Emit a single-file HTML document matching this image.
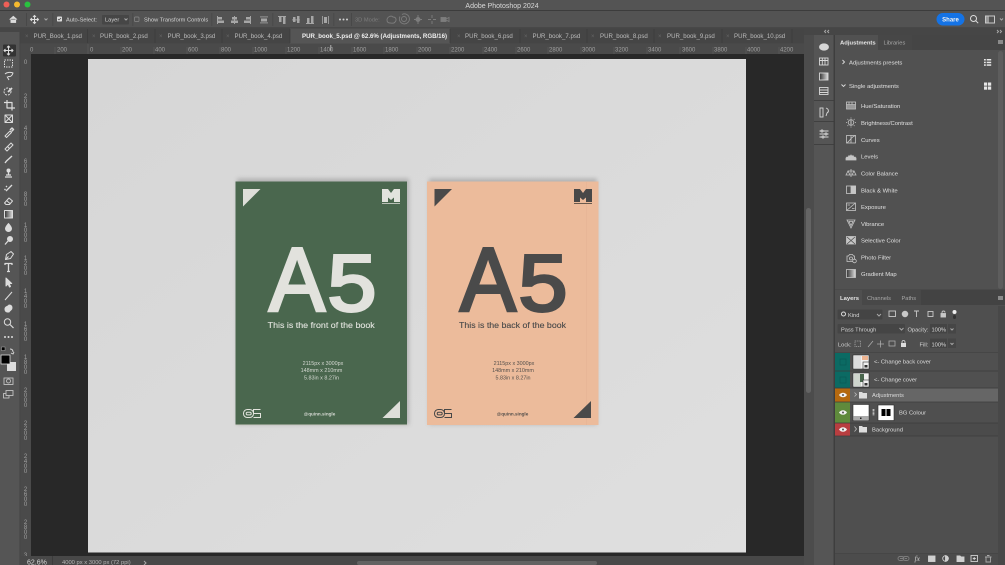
<!DOCTYPE html>
<html><head><meta charset="utf-8"><style>
html,body{margin:0;padding:0;background:#535353;overflow:hidden}
svg{display:block;filter:blur(.3px)}
text{font-family:"Liberation Sans",sans-serif;white-space:pre}
.tb{font-size:5.7px;fill:#d4d4d4}
.tab{font-size:6.1px;fill:#bcbcbc}
.r{font-size:6px;fill:#a0a0a0}
.a{font-size:5.9px;fill:#e0e0e0}
.l{font-size:5.8px;fill:#dcdcdc}
.ic{fill:none;stroke:#dcdcdc;stroke-width:1}
.f{fill:#dcdcdc}
.d{fill:none;stroke:#a8a8a8;stroke-width:1}
</style></head><body>
<svg width="1005" height="565" viewBox="0 0 1005 565" xmlns="http://www.w3.org/2000/svg">
<defs>
<filter id="sh" x="-10%" y="-10%" width="120%" height="120%"><feGaussianBlur stdDeviation="2"/></filter>
<linearGradient id="g1" x1="0" x2="1"><stop offset="0" stop-color="#333"/><stop offset="1" stop-color="#ddd"/></linearGradient>
<linearGradient id="doc" x1="0" y1="0" x2="1" y2="1"><stop offset="0" stop-color="#d6d6d6"/><stop offset="1" stop-color="#dfdfdf"/></linearGradient>
</defs>
<rect width="1005" height="565" fill="#535353"/>
<!-- title bar -->
<rect width="1005" height="10" fill="#545454"/>
<rect y="10" width="1005" height="1" fill="#3c3c3c"/>
<circle cx="6.5" cy="4.5" r="3" fill="#ee5f57"/><circle cx="17" cy="4.5" r="3" fill="#f5b92e"/><circle cx="27.5" cy="4.5" r="3" fill="#29c13f"/>
<text x="502" y="8" font-size="7" fill="#d8d8d8" text-anchor="middle">Adobe Photoshop 2024</text>
<!-- options bar -->
<rect y="11" width="1005" height="17" fill="#535353"/>
<rect y="27.5" width="1005" height=".8" fill="#3e3e3e"/>
<path d="M9.5 19.5l3.8-3.4 3.8 3.4M10.8 18.6v4h5v-4z" class="f" stroke="#ddd" stroke-width=".6"/>
<rect x="26" y="13" width=".7" height="13" fill="#444"/>
<path class="ic" d="M34.5 15.5v8M30.5 19.5h8M33 17l1.5-1.5L36 17M33 22l1.5 1.5L36 22M32 18l-1.5 1.5L32 21M37 18l1.5 1.5L37 21"/>
<path class="d" d="M44.5 18.5l1.5 1.5 1.500-1.500"/>
<rect x="52.500" y="13" width=".7" height="13" fill="#444"/>
<rect x="57" y="16.500" width="5" height="5" rx=".8" fill="#ddd"/><path d="M58 19l1 1 2-2" stroke="#444" fill="none" stroke-width=".7"/>
<text x="66" y="21.500" class="tb">Auto-Select:</text>
<rect x="102" y="15" width="27" height="9.500" rx="1" fill="#464646"/><text x="105" y="21.500" class="tb">Layer</text><path class="d" d="M124.500 18.500l1.500 1.500 1.500-1.500"/>
<rect x="132.500" y="13" width=".7" height="13" fill="#444"/>
<rect x="134.500" y="17" width="4.500" height="4.500" rx=".8" fill="none" stroke="#8a8a8a" stroke-width=".7"/>
<text x="144" y="21.500" class="tb">Show Transform Controls</text>
<rect x="211.500" y="13" width=".7" height="13" fill="#444"/>
<g fill="#a6a6a6"><rect x="217" y="16" width="1" height="8"/><rect x="218" y="17" width="4" height="2.500"/><rect x="218" y="20.500" width="6" height="2.500"/><rect x="234" y="16" width="1" height="8"/><rect x="232" y="17" width="5" height="2.500"/><rect x="231" y="20.500" width="7" height="2.500"/><rect x="250" y="16" width="1" height="8"/><rect x="246" y="17" width="4" height="2.500"/><rect x="244" y="20.500" width="6" height="2.500"/><rect x="260" y="16.500" width="8" height=".8"/><rect x="260" y="22.500" width="8" height=".8"/><rect x="261" y="18.500" width="6" height="3"/></g>
<rect x="272.500" y="13" width=".7" height="13" fill="#444"/>
<g fill="#a6a6a6"><rect x="278" y="16" width="8" height="1"/><rect x="279" y="17" width="2.500" height="5"/><rect x="283" y="17" width="2.500" height="7"/><rect x="292" y="19.500" width="8" height=".8"/><rect x="293" y="17" width="2.500" height="5"/><rect x="297" y="16" width="2.500" height="7"/><rect x="306" y="23" width="8" height="1"/><rect x="307" y="18" width="2.500" height="5"/><rect x="311" y="16" width="2.500" height="7"/><rect x="322" y="16" width=".8" height="8"/><rect x="328" y="16" width=".8" height="8"/><rect x="324" y="17" width="3" height="6"/></g>
<rect x="333.500" y="13" width=".7" height="13" fill="#444"/>
<g fill="#cfcfcf"><circle cx="340" cy="19.500" r="1"/><circle cx="343.500" cy="19.500" r="1"/><circle cx="347" cy="19.500" r="1"/></g>
<rect x="351" y="13" width=".7" height="13" fill="#444"/>
<text x="355" y="21.500" class="tb" style="fill:#7d7d7d">3D Mode:</text>
<g fill="none" stroke="#7d7d7d" stroke-width=".9"><path d="M387 20c0-3 4-5 6-3 3 0 4 3 2 5-1 2-4 1-5 1-2 0-3-1-3-3z"/><circle cx="404" cy="19" r="2.500"/><path d="M402 14.500a5 5 0 1 1-2 2"/><path d="M418 15v9M414 19.500h8"/><circle cx="418" cy="19.500" r="2" fill="#7d7d7d"/><path d="M432 15v3M432 21v3M428 19.500h3M433 19.500h3"/><rect x="441" y="17.500" width="5" height="4" fill="#7d7d7d"/><path d="M446 19l3-1.500v4L446 20"/></g>
<rect x="936.500" y="13" width="28" height="12.500" rx="6.200" fill="#1473e6"/>
<text x="950.500" y="21.500" font-size="6" font-weight="bold" fill="#f2f2f2" text-anchor="middle">Share</text>
<circle cx="973.500" cy="18.500" r="3" class="ic"/><path class="ic" d="M975.700 20.700l2.500 2.500"/>
<rect x="985.500" y="16" width="9" height="7" fill="none" stroke="#c8c8c8"/><rect x="986" y="16.500" width="3" height="6" fill="#999"/>
<path class="d" d="M1000 18.500l1.500 1.500 1.500-1.500"/>
<!-- tabs -->
<rect y="28.500" width="804" height="15" fill="#454545"/>
<rect y="28.500" width="20" height="15" fill="#4a4a4a"/>
<rect x="290" y="28.500" width="160" height="15" fill="#555"/>
<g stroke="#3b3b3b" stroke-width=".7"><path d="M87.500 29v14M155 29v14M222 29v14M290 29v14M450 29v14M520 29v14M587 29v14M654 29v14M722 29v14M792 29v14"/></g>
<g class="tab">
<text x="33.500" y="38">PUR_Book_1.psd</text><text x="100" y="38">PUR_book_2.psd</text><text x="167.500" y="38">PUR_book_3.psd</text><text x="234.500" y="38">PUR_book_4.psd</text>
<text x="302" y="38" style="fill:#f0f0f0;font-weight:bold" textLength="145" lengthAdjust="spacingAndGlyphs">PUR_book_5.psd @ 62.6% (Adjustments, RGB/16)</text>
<text x="465" y="38">PUR_book_6.psd</text><text x="532.500" y="38">PUR_book_7.psd</text><text x="600" y="38">PUR_book_8.psd</text><text x="667" y="38">PUR_book_9.psd</text><text x="734" y="38">PUR_book_10.psd</text></g>
<path class="d" d="M805 33.500l2 2-2 2M808 33.500l2 2-2 2"/>
<g font-size="6"><text x="25" y="38" fill="#666">×</text><text x="92" y="38" fill="#666">×</text><text x="159" y="38" fill="#666">×</text><text x="226" y="38" fill="#666">×</text><text x="457" y="38" fill="#666">×</text><text x="524" y="38" fill="#666">×</text><text x="591" y="38" fill="#666">×</text><text x="658" y="38" fill="#666">×</text><text x="726" y="38" fill="#666">×</text></g>
<!-- rulers -->
<rect x="20" y="43.500" width="784" height="10.500" fill="#4a4a4a"/>
<rect x="20" y="44" width="11" height="512" fill="#4a4a4a"/>
<rect x="0" y="28.500" width="20" height="4" fill="#464646"/>
<rect x="0" y="32" width="20" height="533" fill="#555"/>
<rect x="19.500" y="32" width=".8" height="533" fill="#444"/>
<g class="r">
<text x="30" y="51.500">0</text><text x="57" y="51.500">200</text><text x="90" y="51.500">0</text><text x="122" y="51.500">200</text><text x="155" y="51.500">400</text><text x="188" y="51.500">600</text><text x="221" y="51.500">800</text><text x="254" y="51.500">1000</text><text x="287" y="51.500">1200</text><text x="320" y="51.500">1400</text><text x="353" y="51.500">1600</text><text x="385" y="51.500">1800</text><text x="418" y="51.500">2000</text><text x="451" y="51.500">2200</text><text x="484" y="51.500">2400</text><text x="517" y="51.500">2600</text><text x="549" y="51.500">2800</text><text x="582" y="51.500">3000</text><text x="615" y="51.500">3200</text><text x="648" y="51.500">3400</text><text x="682" y="51.500">3600</text><text x="714" y="51.500">3800</text><text x="747" y="51.500">4000</text><text x="780" y="51.500">4200</text>
</g>
<path stroke="#5e5e5e" stroke-width=".6" fill="none" d="M55 47v7M88 44v10M121 47v7M154 47v7M187 47v7M220 47v7M253 47v7M286 47v7M319 47v7M352 47v7M384 47v7M417 47v7M450 47v7M483 47v7M516 47v7M548 47v7M581 47v7M614 47v7M647 47v7M680 47v7M713 47v7M746 47v7M779 47v7"/>
<rect x="330.500" y="45" width=".7" height="6" fill="#ddd"/>
<g class="r" text-anchor="middle">
<text x="25.500" y="64">0</text>
<text x="25.500" y="98">2</text><text x="25.500" y="103">0</text><text x="25.500" y="108">0</text>
<text x="25.500" y="130">4</text><text x="25.500" y="135">0</text><text x="25.500" y="140">0</text>
<text x="25.500" y="163">6</text><text x="25.500" y="168">0</text><text x="25.500" y="173">0</text>
<text x="25.500" y="196">8</text><text x="25.500" y="201">0</text><text x="25.500" y="206">0</text>
<text x="25.500" y="227">1</text><text x="25.500" y="232">0</text><text x="25.500" y="237">0</text><text x="25.500" y="242">0</text>
<text x="25.500" y="260">1</text><text x="25.500" y="265">2</text><text x="25.500" y="270">0</text><text x="25.500" y="275">0</text>
<text x="25.500" y="293">1</text><text x="25.500" y="298">4</text><text x="25.500" y="303">0</text><text x="25.500" y="308">0</text>
<text x="25.500" y="326">1</text><text x="25.500" y="331">6</text><text x="25.500" y="336">0</text><text x="25.500" y="341">0</text>
<text x="25.500" y="359">1</text><text x="25.500" y="364">8</text><text x="25.500" y="369">0</text><text x="25.500" y="374">0</text>
<text x="25.500" y="392">2</text><text x="25.500" y="397">0</text><text x="25.500" y="402">0</text><text x="25.500" y="407">0</text>
<text x="25.500" y="425">2</text><text x="25.500" y="430">2</text><text x="25.500" y="435">0</text><text x="25.500" y="440">0</text>
<text x="25.500" y="458">2</text><text x="25.500" y="463">4</text><text x="25.500" y="468">0</text><text x="25.500" y="473">0</text>
<text x="25.500" y="491">2</text><text x="25.500" y="496">6</text><text x="25.500" y="501">0</text><text x="25.500" y="506">0</text>
<text x="25.500" y="524">2</text><text x="25.500" y="529">8</text><text x="25.500" y="534">0</text><text x="25.500" y="539">0</text>
<text x="25.500" y="557">3</text>
</g>
<!-- canvas -->
<rect x="31" y="54" width="773" height="502" fill="#282828"/>
<rect x="88" y="59" width="658" height="493.500" fill="url(#doc)"/>
<!-- book front -->
<rect x="237" y="178.500" width="172" height="246" fill="#777" filter="url(#sh)" opacity=".4"/>
<rect x="235.500" y="181.500" width="171.500" height="243.500" fill="#4a674e"/>
<rect x="235.500" y="424.500" width="171.500" height=".8" fill="#c9c9c0"/>
<path d="M243 189h17.500l-17.500 17.500z" fill="#dedfd9"/>
<path d="M382 189h6l3 4 3-4h6v13h-6v-4.500l-3 2.500-3-2.500v4.500h-6z" fill="#e2e3dd"/>
<rect x="382" y="203" width="18" height="1" fill="#b9c0b6"/>
<g fill="#e2e2dd" stroke="#e2e2dd" stroke-width="3">
<text x="269" y="310.500" font-size="90" textLength="56" lengthAdjust="spacingAndGlyphs">A</text>
<text x="327.500" y="310.500" font-size="80" textLength="49" lengthAdjust="spacingAndGlyphs">5</text>
</g>
<text x="321.200" y="328" font-size="8.500" fill="#e0e2dc" stroke="#e0e2dc" stroke-width=".12" text-anchor="middle" textLength="107" lengthAdjust="spacingAndGlyphs">This is the front of the book</text>
<g font-size="5.400" fill="#d5d9d2" text-anchor="middle"><text x="323" y="365">2115px x 3000px</text><text x="321.500" y="372">148mm x 210mm</text><text x="321.500" y="379.500">5.83in x 8.27in</text><text x="319.500" y="415.500" style="font-size:4.600px;font-weight:bold">@quinn.single</text></g>
<g fill="none" stroke="#e2e3dd" stroke-width="1"><rect x="243.500" y="409.500" width="10" height="8" rx="3.800"/><rect x="246.200" y="412.300" width="5" height="2.600" rx="1.300"/><path d="M260.500 409.500h-7v4h7v4h-7"/></g>
<path d="M400 401v17h-17.500z" fill="#dedfd9"/>
<!-- book back -->
<rect x="429" y="178.500" width="168" height="246" fill="#777" filter="url(#sh)" opacity=".4"/>
<rect x="427" y="181.500" width="171.500" height="243.500" fill="#ecbb9b"/>
<rect x="586" y="182" width=".6" height="243" fill="#e5b294"/>
<path d="M434.500 189h17.500l-17.500 17.500z" fill="#4a4a4a"/>
<path d="M574 189h6l3 4 3-4h6v13h-6v-4.500l-3 2.500-3-2.500v4.500h-6z" fill="#484848"/>
<rect x="574" y="203" width="18" height="1" fill="#6a5a4e"/>
<g fill="#4a4a4a" stroke="#4a4a4a" stroke-width="3">
<text x="460" y="310.500" font-size="90" textLength="56" lengthAdjust="spacingAndGlyphs">A</text>
<text x="518.500" y="310.500" font-size="80" textLength="49" lengthAdjust="spacingAndGlyphs">5</text>
</g>
<text x="512.500" y="328" font-size="8.500" fill="#4a4a4a" stroke="#4a4a4a" stroke-width=".12" text-anchor="middle" textLength="107" lengthAdjust="spacingAndGlyphs">This is the back of the book</text>
<g font-size="5.400" fill="#55504c" text-anchor="middle"><text x="514" y="365">2115px x 3000px</text><text x="513" y="372">148mm x 210mm</text><text x="513" y="379.500">5.83in x 8.27in</text><text x="512.500" y="415.500" style="font-size:4.600px;font-weight:bold">@quinn.single</text></g>
<g fill="none" stroke="#474747" stroke-width="1"><rect x="434.500" y="409.500" width="10" height="8" rx="3.800"/><rect x="437.200" y="412.300" width="5" height="2.600" rx="1.300"/><path d="M451.500 409.500h-7v4h7v4h-7"/></g>
<path d="M591 401v17h-17.500z" fill="#4a4a4a"/>
<!-- status bar -->
<rect x="20" y="556" width="784" height="9" fill="#484848"/>
<text x="27" y="564.500" font-size="7" fill="#d8d8d8">62.6%</text>
<text x="62" y="564" font-size="5.800" fill="#b4b4b4">4000 px x 3000 px (72 ppi)</text>
<path class="d" d="M144 561l2 2-2 2"/>
<rect x="52" y="556" width="1" height="9" fill="#3c3c3c"/>
<rect x="357" y="561" width="240" height="4" rx="2" fill="#626262"/>
<!-- tools -->
<rect x="3" y="44.500" width="13" height="12" rx="1" fill="#333"/>
<g fill="none" stroke="#dcdcdc" stroke-width="1" stroke-linejoin="round">
<path d="M8.500 46v9M4 50.500h9M7 47.500l1.500-1.500L10 47.500M7 53.500l1.500 1.500L10 53.500M5.500 49L4 50.500 5.500 52M11.500 49L13 50.500 11.500 52"/>
<rect x="4.500" y="60" width="8" height="7" stroke-dasharray="1.500 1"/>
<path d="M5 74c2-2 6-2 8-1-1 3-3 4-5 3.500M7 76.500l2 3.500"/>
<circle cx="7.500" cy="91.500" r="3.500" stroke-dasharray="2 1"/><path d="M8 92l4-4" stroke-width="1.800"/>
<path d="M7 100v8h8M4 102.500h8v8" stroke-width="1.200"/>
<rect x="5" y="115" width="7.500" height="7.500"/><path d="M5 115l7.500 7.500M12.500 115L5 122.500"/>
<path d="M5 136l5-5 1.500 1.500-5 5z"/><path d="M10 130l2-2 1.500 1.500-2 2" stroke-width="1.500"/>
<path d="M5 149l6-6 2 2-6 6z"/><path d="M7.500 146.500l2 2"/>
<path d="M5 163l1.500-2 5.500-5" stroke-width="1.400"/>
<path d="M5 177h7M6 175h5M8.500 175v-3" stroke-width="1.300"/><circle cx="8.500" cy="170.500" r="1.500" fill="#dcdcdc"/>
<path d="M6 191l6-6M6 186l1 1M4.500 189l1 1" stroke-width="1.300"/>
<path d="M4.500 203l4.500-5 3.500 3-3 3.500h-3.500z"/><path d="M6.500 200.500l3.500 3"/>
<rect x="4.500" y="210.500" width="8" height="7.500" fill="url(#g1)"/>
<path d="M8.500 223.500c2 2.500 3 3.500 3 5a3 3 0 0 1-6 0c0-1.500 1-2.500 3-5z" fill="#dcdcdc"/>
<circle cx="10" cy="239" r="2.500" fill="#dcdcdc"/><path d="M8 241l-3 3.500" stroke-width="1.300"/>
<path d="M5.500 259.500l1-5 4.500-3 2.500 2.500-3 4.500z"/><path d="M5.500 259.500l3-3"/>
<path d="M5 265v-1.500h7V265M8.500 263.500v8M7 271.500h3" stroke-width="1.300"/>
<path d="M6 278v8l2-2 1.500 3 1-.5-1.400-3h2.600z" fill="#dcdcdc"/>
<path d="M5 300l7-8"/>
<path d="M5 309c0-3 3-2 4-4 2 0 3 1 3 3s-2 2-3 4c-2 0-4 0-4-3z" fill="#dcdcdc"/>
<circle cx="7.500" cy="322" r="3.200"/><path d="M10 324.500l3.500 3.500" stroke-width="1.200"/>
<rect x="4" y="378" width="9" height="6.500" stroke="#b8b8b8"/><circle cx="8.500" cy="381" r="2" stroke="#b8b8b8"/>
<rect x="6" y="390.500" width="7" height="5" stroke="#b8b8b8"/><path d="M6 393.500H3.500V398H9v-2.500" stroke="#b8b8b8"/>
<path d="M10 349c2 0 3 1 3 3M11 353l2 1 1-2" stroke-width=".9"/>
</g>
<g fill="#dcdcdc"><circle cx="5" cy="337" r="1"/><circle cx="8.500" cy="337" r="1"/><circle cx="12" cy="337" r="1"/>
<rect x="7" y="362" width="9" height="9"/></g>
<rect x="1" y="355" width="9" height="9" fill="#000" stroke="#ddd" stroke-width=".8"/>
<rect x="1.500" y="347" width="3.500" height="3.500" fill="#000" stroke="#ccc" stroke-width=".4"/>
<!-- scroll strip + dock -->
<rect x="804" y="28" width="10" height="537" fill="#4c4c4c"/>
<rect x="806" y="208" width="5" height="185" rx="2.500" fill="#646464"/>
<rect x="804" y="28" width="201" height="7" fill="#464646"/>
<rect x="814" y="35" width="19.500" height="530" fill="#555"/>
<rect x="833.500" y="35" width="1.500" height="530" fill="#3e3e3e"/>
<g fill="#3c3c3c"><rect x="814" y="100" width="20" height=".8"/><rect x="814" y="121" width="20" height=".8"/><rect x="814" y="144" width="20" height=".8"/></g>
<path class="d" d="M829 30l-1.500 1.500 1.500 1.500M826 30l-1.500 1.500 1.500 1.500M1000 30l1.500 1.500-1.500 1.500M997 30l1.500 1.500-1.500 1.500" stroke-width=".6"/>
<g fill="none" stroke="#d8d8d8" stroke-width=".9">
<ellipse cx="824" cy="47" rx="4.500" ry="3.200" fill="#d8d8d8"/>
<rect x="819.500" y="58" width="8.500" height="7"/><path d="M822.300 58v7M825 58v7M819.500 60.500h8.500"/>
<rect x="819.500" y="73" width="8.500" height="7" fill="url(#g1)"/>
<rect x="819.500" y="87.500" width="8.500" height="7"/><path d="M819.500 90h8.500M819.500 92.500h8.500"/>
<rect x="820" y="108" width="3" height="9"/><path d="M826 108c3 1 3 4 1 5l-1 3"/>
<path d="M819.500 131h9M819.500 134h9M819.500 137h9"/><circle cx="822" cy="131" r="1" fill="#555"/><circle cx="826" cy="134" r="1" fill="#555"/><circle cx="823" cy="137" r="1" fill="#555"/>
</g>
<!-- adjustments panel -->
<rect x="835" y="35" width="170" height="255" fill="#515151"/>
<rect x="835" y="35" width="170" height="15" fill="#454545"/>
<rect x="835" y="35" width="43" height="15" fill="#515151"/>
<rect x="878" y="35" width="34" height="15" fill="#474747"/>
<text x="840" y="44.500" font-size="5.900" font-weight="bold" fill="#e6e6e6">Adjustments</text>
<text x="883.500" y="44.500" class="tb" style="fill:#a8a8a8">Libraries</text>
<rect x="998" y="40" width="5" height="4" fill="#8a8a8a"/>
<rect x="998" y="51" width="5" height="238" rx="2.500" fill="#5d5d5d"/>
<path d="M842.500 60l2 2-2 2M841.500 84.500l2 2 2-2" fill="none" stroke="#dcdcdc" stroke-width=".9"/>
<text x="849" y="64.300" class="a">Adjustments presets</text>
<text x="849" y="88" class="a">Single adjustments</text>
<g fill="#e6e6e6"><rect x="984" y="59" width="1.800" height="1.500"/><rect x="984" y="61.700" width="1.800" height="1.500"/><rect x="984" y="64.300" width="1.800" height="1.500"/><rect x="986.700" y="59" width="4.500" height="1.500"/><rect x="986.700" y="61.700" width="4.500" height="1.500"/><rect x="986.700" y="64.300" width="4.500" height="1.500"/>
<rect x="984" y="82.500" width="3.200" height="3.200"/><rect x="988" y="82.500" width="3.200" height="3.200"/><rect x="984" y="86.500" width="3.200" height="3.200"/><rect x="988" y="86.500" width="3.200" height="3.200"/></g>
<g class="a">
<text x="861" y="108">Hue/Saturation</text><text x="861" y="125">Brightness/Contrast</text><text x="861" y="141.800">Curves</text><text x="861" y="158.600">Levels</text><text x="861" y="175.500">Color Balance</text><text x="861" y="192.300">Black &amp; White</text><text x="861" y="209">Exposure</text><text x="861" y="225.800">Vibrance</text><text x="861" y="242.600">Selective Color</text><text x="861" y="259.400">Photo Filter</text><text x="861" y="276.200">Gradient Map</text>
</g>
<g fill="none" stroke="#c6c6c6" stroke-width=".8">
<rect x="846.500" y="102" width="9" height="7"/><path d="M846.500 104.500h9M849 102v2.500M852 102v2.500"/><rect x="847" y="105" width="8" height="3.500" fill="#999" stroke="none"/>
<circle cx="851" cy="122.500" r="2.800"/><path d="M851 119.700v5.600" stroke-width="1"/><path d="M851 117.500v1M851 126.500v1M846 122.500h1M855 122.500h1M847.500 119l.7.700M854.500 119l-.7.700M847.500 126l.7-.7M854.500 126l-.7-.7"/>
<rect x="846.500" y="135.500" width="9" height="7.500"/><path d="M846.500 143c3-1 4-6 9-7.500M851 135.500v7.500"/>
<path d="M846 160h10v-2l-1-1-1 .5-1-2-1 1-1-1.500-1 1.500-1-1-1 2-1-.5-1 1z" fill="#c6c6c6"/>
<path d="M851 169v8M848 171h6M848 171l-2 4h4zM854 171l-2 4h4z"/>
<rect x="846.500" y="186" width="9" height="7.500"/><rect x="851" y="186" width="4.500" height="7.500" fill="#c6c6c6"/>
<rect x="846.500" y="203" width="9" height="7.500"/><path d="M846.500 210.500l9-7.500M847.500 205h2.500M852 208.500h2.500"/>
<path d="M847 220h8l-4 8z"/><path d="M849 221.500h4l-2 4z"/>
<rect x="846.500" y="236.500" width="9" height="7.500" fill="#c6c6c6"/><path d="M847 237l4 3.500 4-3.500M847 244l4-3.500 4 3.500" stroke="#515151"/>
<path d="M847 256h1.500l1-1.500h3l1 1.500h1v5.500h-7.500z"/><circle cx="851" cy="258.500" r="1.500"/><circle cx="854.500" cy="261" r="1.800" fill="#515151"/>
<rect x="846.500" y="269.500" width="9" height="8" fill="url(#g1)"/>
</g>
<!-- layers panel -->
<rect x="835" y="289.500" width="170" height="275.500" fill="#4f4f4f"/>
<rect x="835" y="289.500" width="170" height="15.500" fill="#434343"/>
<rect x="835" y="290" width="27" height="15" fill="#4f4f4f"/>
<rect x="862" y="290" width="34" height="15" fill="#484848"/><rect x="896" y="290" width="25" height="15" fill="#484848"/>
<text x="840" y="300" font-size="5.900" font-weight="bold" fill="#e6e6e6">Layers</text>
<text x="867" y="300" class="tb" style="fill:#a8a8a8">Channels</text><text x="901.500" y="300" class="tb" style="fill:#a8a8a8">Paths</text>
<rect x="998" y="296" width="5" height="4" fill="#8a8a8a"/>
<rect x="837.500" y="309.500" width="45" height="10" rx="1" fill="#444"/>
<circle cx="843.500" cy="314" r="2" class="ic" stroke-width=".7"/>
<text x="848" y="317" class="tb">Kind</text><path class="d" d="M877 314l2 2 2-2"/>
<g fill="none" stroke="#c8c8c8" stroke-width=".9"><rect x="889" y="311" width="6.500" height="5.500"/><circle cx="905" cy="314" r="2.800" fill="#c8c8c8"/><path d="M914 311h5M916.500 311v6"/><rect x="928" y="311.500" width="5" height="5"/><rect x="941" y="313.500" width="4.500" height="3.500" fill="#c8c8c8"/><path d="M942 313.500v-1c0-2 3-2 3 0"/></g>
<circle cx="954.500" cy="312" r="2" fill="#eee"/><rect x="953" y="315" width="3" height="4" fill="#333" rx="1.500"/>
<rect x="837.500" y="324" width="67.500" height="9.500" rx="1" fill="#454545"/>
<text x="841" y="331.500" class="tb">Pass Through</text><path class="d" d="M899.500 328l2 2 2-2"/>
<text x="907.500" y="331.500" class="tb">Opacity:</text>
<rect x="930" y="324" width="17" height="9.500" fill="#444"/><text x="931.500" y="331.500" class="tb" style="fill:#ddd">100%</text>
<rect x="948" y="324" width="8" height="9.500" fill="#464646"/><path class="d" d="M950.500 328.500l1.500 1.500 1.500-1.500"/>
<text x="838" y="346.500" class="tb">Lock:</text>
<g fill="none" stroke="#aaa" stroke-width=".8"><rect x="855" y="341" width="5.500" height="5.500" stroke-dasharray="1 .8"/><path d="M868 347l5-6"/><path d="M880.500 340.500v7M877 344h7"/><rect x="889" y="341" width="6" height="5"/></g>
<rect x="901" y="343" width="5" height="4" fill="#ddd"/><path d="M902 343v-1c0-2 3-2 3 0v1" fill="none" stroke="#ddd" stroke-width=".8"/>
<text x="919.500" y="346.500" class="tb">Fill:</text>
<rect x="930" y="338.500" width="17" height="9.500" fill="#444"/><text x="931.500" y="346.300" class="tb" style="fill:#ddd">100%</text>
<rect x="948" y="338.500" width="8" height="9.500" fill="#464646"/><path class="d" d="M950.500 343l1.500 1.500 1.500-1.500"/>
<rect x="835" y="352.500" width="163" height=".8" fill="#3e3e3e"/>
<!-- layers rows -->
<rect x="835" y="353" width="15" height="35" fill="#0b6a63"/>
<rect x="840" y="359" width="6" height="6" fill="none" stroke="#0a5b55" stroke-width=".7"/>
<rect x="840" y="377" width="6" height="6" fill="none" stroke="#0a5b55" stroke-width=".7"/>
<rect x="835" y="388.500" width="15" height="13.500" fill="#b5690f"/>
<rect x="835" y="402" width="15" height="21" fill="#5f8a3c"/>
<rect x="835" y="423" width="15" height="13" fill="#b83e40"/>
<rect x="850" y="388.500" width="148" height="13.500" fill="#666"/>
<rect x="850" y="353" width="148" height="18" fill="#505050"/>
<rect x="850" y="371.500" width="148" height="17" fill="#505050"/>
<rect x="850" y="423" width="148" height="13" fill="#4b4b4b"/>
<path stroke="#3d3d3d" stroke-width=".7" d="M835 371h163M835 388h163M835 402h163M835 423h163M835 436h163"/>
<g fill="#f2f2f2"><path d="M839 395c2-3 6-3 8 0-2 3-6 3-8 0z"/><path d="M839 412.500c2-3 6-3 8 0-2 3-6 3-8 0z"/><path d="M839 429.500c2-3 6-3 8 0-2 3-6 3-8 0z"/></g>
<g fill="#555"><circle cx="843" cy="395" r="1"/><circle cx="843" cy="412.500" r="1"/><circle cx="843" cy="429.500" r="1"/></g>
<rect x="853" y="355" width="16" height="14" fill="#f0f0f0" stroke="#2e2e2e" stroke-width=".6"/><rect x="854" y="356" width="7" height="12" fill="#ddd"/><rect x="862" y="356" width="6" height="4" fill="#edb491"/>
<rect x="853" y="373" width="16" height="14" fill="#f0f0f0" stroke="#2e2e2e" stroke-width=".6"/><rect x="854" y="374" width="7" height="12" fill="#cfd5cd"/><rect x="860" y="374" width="4" height="8" fill="#4a674e"/>
<rect x="863" y="362" width="6" height="7" fill="#f0f0f0" stroke="#333" stroke-width=".6"/><rect x="864.500" y="365" width="3" height="2.500" fill="#333"/>
<rect x="863" y="380" width="6" height="7" fill="#f0f0f0" stroke="#333" stroke-width=".6"/><rect x="864.500" y="383" width="3" height="2.500" fill="#333"/>
<text x="874" y="363.700" class="l">&lt;- Change back cover</text>
<text x="874" y="381.300" class="l">&lt;- Change cover</text>
<path d="M854.500 392.500l2 2-2 2M854.500 426.500l2 2.500-2 2.500" fill="none" stroke="#bbb" stroke-width=".8"/>
<path d="M859 392h3l1 1h4v5.500h-8z" fill="#ddd"/><path d="M859 426h3l1 1h4v5.500h-8z" fill="#ddd"/>
<text x="872" y="396.800" class="l">Adjustments</text>
<text x="872" y="431.500" class="l">Background</text>
<text x="899" y="414.500" class="l">BG Colour</text>
<rect x="853" y="404.500" width="16" height="16" fill="#fff" stroke="#2e2e2e" stroke-width=".6"/><rect x="853.500" y="416" width="15" height="4.500" fill="#aaa"/><rect x="860" y="417.500" width="1.500" height="1.500" fill="#222"/>
<path d="M873.500 409v7" stroke="#bbb" stroke-width="1.800" stroke-dasharray="2.500 .8" fill="none"/>
<rect x="878" y="405" width="16" height="15.500" fill="#fff" stroke="#2e2e2e" stroke-width=".6"/><rect x="881.500" y="409" width="4" height="7" fill="#000"/><rect x="886.500" y="409" width="4" height="7" fill="#000"/>
<!-- layers footer -->
<rect x="835" y="553" width="163" height="12" fill="#4c4c4c"/>
<rect x="835" y="553" width="163" height=".6" fill="#424242"/>
<rect x="998" y="306" width="7" height="259" fill="#484848"/>
<g fill="none" stroke="#d0d0d0" stroke-width=".9">
<path d="M900 558.500h3M905 558.500h2M900 556.500h2a2 2 0 0 1 0 4h-2a2 2 0 0 1 0-4zM905 556.500h2a2 2 0 0 1 0 4h-2a2 2 0 0 1 0-4z" stroke="#7d7d7d"/>
<rect x="928.500" y="556" width="6.500" height="5.500" fill="#d0d0d0"/>
<circle cx="945.500" cy="558.500" r="2.800"/><path d="M945.500 555.700a2.800 2.800 0 0 1 0 5.600z" fill="#d0d0d0"/>
<path d="M957 556h3l1 1h3v4.500h-7z" fill="#d0d0d0"/>
<rect x="971" y="555.500" width="6.500" height="6"/><path d="M974.200 557v3M972.800 558.500h3"/>
<path d="M985 557h6.500M986 557v5h4.500v-5M987 555.500h2.500" stroke="#aaa"/>
</g>
<text x="914.500" y="561" font-size="7.500" font-style="italic" fill="#d0d0d0" style="font-family:'Liberation Serif',serif">fx</text>
</svg>
</body></html>
